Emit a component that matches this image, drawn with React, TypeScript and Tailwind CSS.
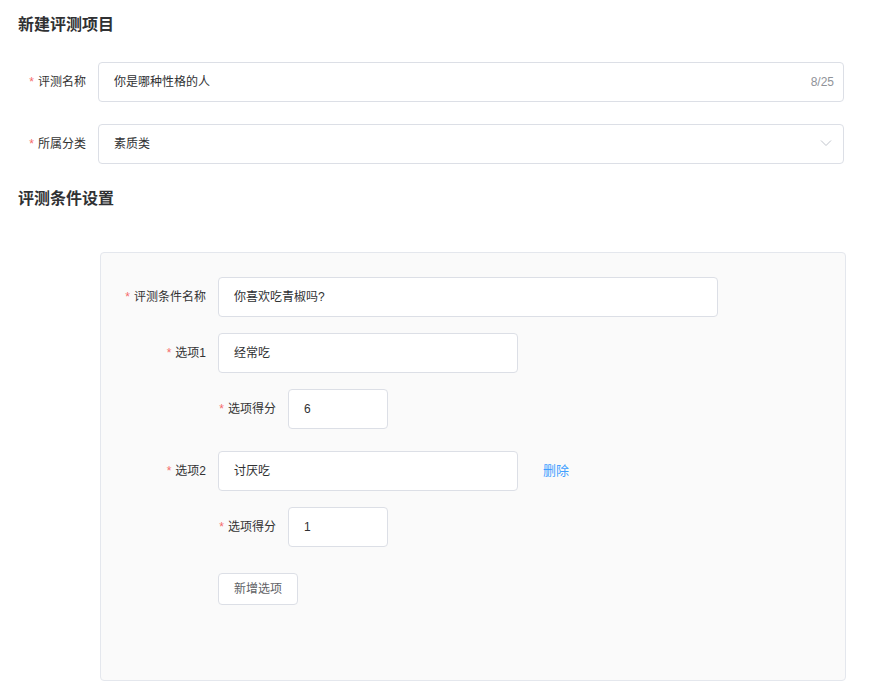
import React from "react";

const font = "font-['Liberation_Sans','Noto_Sans_CJK_SC',sans-serif]";

function Label({ text, width }: { text: string; width: string }) {
  return (
    <div className={`${width} shrink-0 pr-3 text-right text-xs text-[#333]`}>
      <span className="mr-1 text-[#f56c6c]">*</span>
      {text}
    </div>
  );
}

function Input({ value, width }: { value: string; width: string }) {
  return (
    <div
      className={`${width} flex h-10 items-center rounded border border-[#dcdfe6] bg-white pl-[15px] text-xs text-[#303133]`}
    >
      {value}
    </div>
  );
}

export default function App() {
  return (
    <div className={`${font} min-h-[685px] bg-white pl-[18px] pr-[26px] pt-[13px]`}>
      {/* 标题 */}
      <h2 className="h-6 text-base leading-6 font-bold text-[#303133]">新建评测项目</h2>

      <div className="mt-[25px] flex items-center">
        <Label text="评测名称" width="w-[80px]" />
        <div className="flex h-10 flex-1 items-center justify-between rounded border border-[#dcdfe6] bg-white pl-[15px] pr-[9px] text-xs text-[#303133]">
          <span>你是哪种性格的人</span>
          <span className="text-[#909399]">8/25</span>
        </div>
      </div>

      <div className="mt-[22px] flex items-center">
        <Label text="所属分类" width="w-[80px]" />
        <div className="flex h-10 flex-1 items-center justify-between rounded border border-[#dcdfe6] bg-white pl-[15px] pr-[11px] text-xs text-[#303133]">
          <span>素质类</span>
          <svg width="12" height="8" viewBox="0 0 12 8" fill="none" className="-mt-[3px]">
            <polyline points="1,1.5 6,6.5 11,1.5" stroke="#c0c4cc" strokeWidth="1" />
          </svg>
        </div>
      </div>

      <h2 className="mt-[23px] h-6 text-base leading-6 font-bold text-[#303133]">评测条件设置</h2>

      {/* 条件面板 */}
      <div className="ml-[82px] mt-[41px] h-[429px] w-[746px] rounded border border-[#e4e7ed] bg-[#fafafa] pt-6">
        <div className="flex items-center">
          <Label text="评测条件名称" width="w-[117px]" />
          <Input value="你喜欢吃青椒吗?" width="w-[500px]" />
        </div>

        <div className="mt-4 flex items-center">
          <Label text="选项1" width="w-[117px]" />
          <Input value="经常吃" width="w-[300px]" />
        </div>
        <div className="mt-4 flex items-center pl-[117px]">
          <Label text="选项得分" width="w-[70px]" />
          <Input value="6" width="w-[100px]" />
        </div>

        <div className="mt-[22px] flex items-center">
          <Label text="选项2" width="w-[117px]" />
          <Input value="讨厌吃" width="w-[300px]" />
          <span className="ml-[25px] cursor-pointer text-[13px] text-[#409eff]">删除</span>
        </div>
        <div className="mt-4 flex items-center pl-[117px]">
          <Label text="选项得分" width="w-[70px]" />
          <Input value="1" width="w-[100px]" />
        </div>

        <div className="mt-[26px] pl-[117px]">
          <button className="h-8 w-20 rounded border border-[#dcdfe6] bg-white text-xs text-[#606266]">
            新增选项
          </button>
        </div>
      </div>
    </div>
  );
}
